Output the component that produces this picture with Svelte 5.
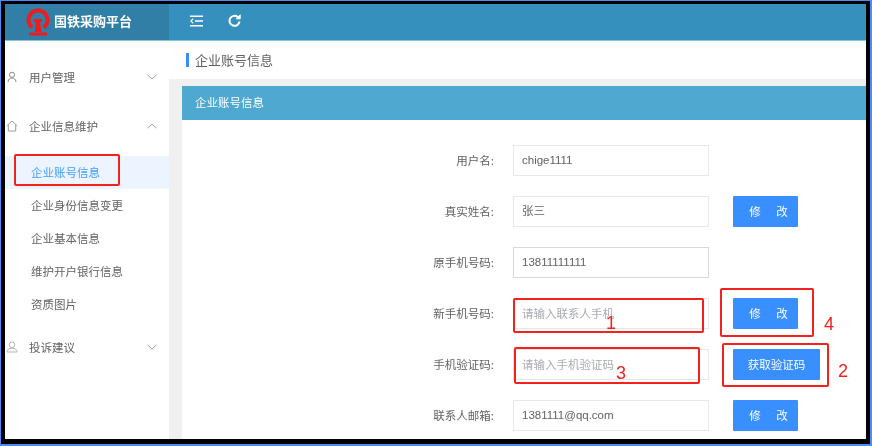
<script>
  const menu = ["企业账号信息", "企业身份信息变更", "企业基本信息", "维护开户银行信息", "资质图片"];
  const rows = [
    { label: "用户名:", value: "chige1111" },
    { label: "真实姓名:", value: "张三", action: "修　改" },
    { label: "原手机号码:", value: "13811111111", strong: true },
    { label: "新手机号码:", hint: "请输入联系人手机", action: "修　改" },
    { label: "手机验证码:", hint: "请输入手机验证码", action: "获取验证码", wide: true },
    { label: "联系人邮箱:", value: "1381111@qq.com", action: "修　改" }
  ];
  const marks = [
    { cls: "m-phone", n: "1" },
    { cls: "m-code", n: "3" },
    { cls: "m-save", n: "4" },
    { cls: "m-send", n: "2" }
  ];
</script>

<div class="frame">
  <div class="screen">
    <header class="top">
      <div class="brand">
        <svg class="logo" viewBox="0 0 24 30" width="24" height="30">
          <path d="M6.200 21.500A9.500 9.500 0 1 1 17.800 21.500" fill="none" stroke="#ee1c1c" stroke-width="4" />
          <path d="M8 13h8v3h-1.800l1 10h-6.400l1-10H8z" fill="#ee1c1c" />
          <rect x="3" y="26.500" width="18" height="3" fill="#ee1c1c" />
        </svg>
        <span>国铁采购平台</span>
      </div>
      <div class="tools">
        <svg viewBox="0 0 13 12" width="13" height="12" fill="none" stroke="#fff" stroke-width="1.500">
          <path d="M0 1.200h13M5 6h8M0 10.800h13" />
          <path d="M3.200 3.800L.8 6l2.400 2.200" stroke-width="1.200" />
        </svg>
        <svg viewBox="0 0 13 13" width="13" height="13" fill="none" stroke="#fff" stroke-width="2">
          <path d="M11.500 7.500A5 5 0 1 1 9.800 3" />
          <path d="M8.200 4.800h4V.8z" stroke-width="1" fill="#fff" />
        </svg>
      </div>
    </header>

    <div class="body">
      <aside class="side">
        <div class="group g-first">
          <svg viewBox="0 0 12 12" width="12" height="12" fill="none" stroke="#8a8a8a">
            <circle cx="6" cy="3.800" r="2.600" />
            <path d="M2 11c.4-2.800 1.800-4 4-4s3.600 1.200 4 4" />
          </svg>
          <span>用户管理</span>
          <svg class="chev" viewBox="0 0 10 6" width="10" height="6"><path d="M.5.800L5 5 9.500.800" /></svg>
        </div>
        <div class="group g-open">
          <svg viewBox="0 0 12 12" width="12" height="12" fill="none" stroke="#9a9a9a">
            <path d="M.8 5.800L6 1l5.200 4.800M2.300 5v6h7.400V5" />
          </svg>
          <span>企业信息维护</span>
          <svg class="chev" viewBox="0 0 10 6" width="10" height="6"><path d="M.5 5.200L5 1l4.500 4.200" /></svg>
        </div>
        <ul>
          {#each menu as item, i}
            <li class:active={i === 0}>{item}</li>
          {/each}
        </ul>
        <div class="group g-last">
          <svg viewBox="0 0 12 12" width="12" height="12" fill="none" stroke="#b5b5b5">
            <circle cx="6" cy="3.800" r="2.800" />
            <path d="M1 11c0-2.600 2-3.800 5-3.800s5 1.200 5 3.800z" />
          </svg>
          <span>投诉建议</span>
          <svg class="chev" viewBox="0 0 10 6" width="10" height="6"><path d="M.5.800L5 5 9.500.800" /></svg>
        </div>
        <div class="note note-menu"></div>
      </aside>

      <main class="content">
        <div class="crumb"><i></i>企业账号信息</div>
        <section class="card">
          <h2>企业账号信息</h2>
          <div class="form">
            {#each rows as row}
              <div class="row">
                <label>{row.label}</label>
                <div class="field" class:strong={row.strong} class:hint={row.hint}>{row.value ?? row.hint}</div>
                {#if row.action}
                  <button class:wide={row.wide}>{row.action}</button>
                {/if}
              </div>
            {/each}
            {#each marks as mark}
              <div class="note {mark.cls}"><b>{mark.n}</b></div>
            {/each}
          </div>
        </section>
      </main>
    </div>
  </div>
</div>

<style>
  :global(body) {
    margin: 0;
    background: #4d8bf5;
  }
  .frame {
    width: 872px;
    height: 446px;
    box-sizing: border-box;
    padding: 1px 2px 2px 1px;
    overflow: hidden;
    font-family: "Noto Sans CJK SC", "Liberation Sans", sans-serif;
    font-size: 11.5px;
    color: #606266;
  }
  .screen {
    height: 100%;
    box-sizing: border-box;
    border: solid #000;
    border-width: 3px 4px 5px 4px;
    background: #f0f0f0;
    display: flex;
    flex-direction: column;
    overflow: hidden;
    filter: blur(0.45px);
  }
  .top {
    height: 36px;
    flex: none;
    display: flex;
    background: #3590be;
    border-bottom: 1px solid #8cc3dc;
  }
  .brand {
    width: 164px;
    box-sizing: border-box;
    padding-left: 21px;
    display: flex;
    align-items: center;
    gap: 4px;
    background: #317fa6;
    color: #fff;
    font-size: 13px;
    font-weight: 700;
  }
  .brand span {
    margin-bottom: 3px;
  }
  .logo {
    margin-bottom: 2px;
  }
  .tools {
    display: flex;
    align-items: center;
    gap: 25px;
    padding: 0 0 3px 21px;
  }
  .body {
    flex: 1;
    display: flex;
    min-height: 0;
  }
  .side {
    width: 164px;
    flex: none;
    background: #fff;
    position: relative;
  }
  .group {
    display: flex;
    align-items: center;
    height: 20px;
    padding-left: 1px;
  }
  .group span {
    margin-left: 11px;
  }
  .chev {
    margin-left: auto;
    margin-right: 12px;
    fill: none;
    stroke: #a0a0a0;
  }
  .g-first {
    margin-top: 26px;
  }
  .g-open {
    margin-top: 29px;
  }
  .g-last {
    margin-top: 16px;
  }
  ul {
    list-style: none;
    margin: 20px 0 0;
    padding: 0;
  }
  li {
    height: 33px;
    line-height: 33px;
    padding-left: 26px;
  }
  li.active {
    background: #ecf5ff;
    color: #409eff;
  }
  .content {
    flex: 1;
    min-width: 0;
  }
  .crumb {
    height: 38px;
    box-sizing: border-box;
    padding-bottom: 2px;
    background: #fff;
    display: flex;
    align-items: center;
    font-size: 13px;
  }
  .crumb i {
    width: 3px;
    height: 14px;
    margin: 2px 6px 0 17px;
    background: #3a8ffe;
  }
  .card {
    height: 100%;
    margin: 7px 0 0 13px;
    background: #fff;
  }
  h2 {
    margin: 0;
    height: 34px;
    line-height: 33px;
    padding-left: 13px;
    background: #4ea8d0;
    color: #fff;
    font-size: 11.5px;
    font-weight: 400;
  }
  .form {
    position: relative;
    padding-top: 25px;
  }
  .row {
    display: flex;
    align-items: center;
    height: 31px;
    margin-bottom: 20px;
  }
  label {
    width: 312px;
    margin: 0 19px 2px 0;
    text-align: right;
  }
  .field {
    width: 196px;
    height: 31px;
    line-height: 29px;
    box-sizing: border-box;
    border: 1px solid #e8e8e8;
    padding-left: 8px;
    font-family: "Liberation Sans", "Noto Sans CJK SC", sans-serif;
    font-size: 11.5px;
  }
  .field.strong {
    border-color: #d8d8d8;
  }
  .field.hint {
    color: #a8abb2;
    font-family: "Noto Sans CJK SC", sans-serif;
  }
  button {
    width: 65px;
    height: 31px;
    margin-left: 24px;
    padding: 0 0 2px 8px;
    border: 0;
    border-radius: 1px;
    background: #3a8ffe;
    color: #fff;
    font: inherit;
    font-size: 11.5px;
    letter-spacing: 2px;
  }
  button.wide {
    width: 87px;
    padding: 0 0 2px;
    letter-spacing: 0;
  }
  .note {
    position: absolute;
    box-sizing: border-box;
    border: 2px solid #f4211c;
    border-radius: 2px;
    pointer-events: none;
  }
  .note b {
    position: absolute;
    color: #f4211c;
    font-family: "Liberation Sans", sans-serif;
    font-size: 18px;
    font-weight: 400;
    line-height: 20px;
  }
  .note-menu {
    left: 9px;
    top: 113px;
    width: 106px;
    height: 32px;
  }
  .m-phone {
    left: 331px;
    top: 178px;
    width: 191px;
    height: 35px;
  }
  .m-phone b {
    left: 91px;
    top: 13px;
  }
  .m-code {
    left: 332px;
    top: 227px;
    width: 186px;
    height: 37px;
  }
  .m-code b {
    left: 100px;
    top: 14px;
  }
  .m-save {
    left: 538px;
    top: 168px;
    width: 94px;
    height: 49px;
  }
  .m-save b {
    left: 102px;
    top: 24px;
  }
  .m-send {
    left: 540px;
    top: 223px;
    width: 107px;
    height: 44px;
  }
  .m-send b {
    left: 114px;
    top: 16px;
  }
</style>
